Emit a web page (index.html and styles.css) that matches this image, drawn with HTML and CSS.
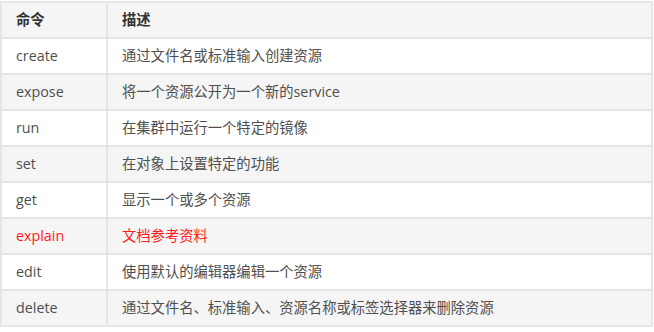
FILE: index.html
```html
<!DOCTYPE html>
<html lang="zh">
<head>
<meta charset="utf-8">
<link rel="stylesheet" href="styles.css">
</head>
<body>
<table class="cmd-table">
  <thead>
    <tr><th class="col-cmd">命令</th><th>描述</th></tr>
  </thead>
  <tbody>
    <tr><td>create</td><td>通过文件名或标准输入创建资源</td></tr>
    <tr><td>expose</td><td>将一个资源公开为一个新的service</td></tr>
    <tr><td>run</td><td>在集群中运行一个特定的镜像</td></tr>
    <tr><td>set</td><td>在对象上设置特定的功能</td></tr>
    <tr><td>get</td><td>显示一个或多个资源</td></tr>
    <tr class="hl"><td>explain</td><td>文档参考资料</td></tr>
    <tr><td>edit</td><td>使用默认的编辑器编辑一个资源</td></tr>
    <tr><td>delete</td><td>通过文件名、标准输入、资源名称或标签选择器来删除资源</td></tr>
  </tbody>
</table>
</body>
</html>
```

FILE: styles.css
```css
html, body {
  margin: 0;
  padding: 0;
  background: #fff;
}
.cmd-table {
  border-collapse: collapse;
  width: 653px;
  margin: 1px 0 0 0;
  font-family: "Open Sans", "Noto Sans CJK SC", sans-serif;
  font-size: 14.3px;
  color: #4f4f4f;
  table-layout: fixed;
}
.cmd-table th,
.cmd-table td {
  border: 2px solid #e3e5e7;
  height: 34px;
  padding: 0 14px;
  text-align: left;
  vertical-align: middle;
  line-height: 20px;
  white-space: nowrap;
}
.cmd-table th {
  font-weight: bold;
  color: #333;
  background: #f5f5f5;
}
.col-cmd {
  width: 76px;
}
.cmd-table tbody tr:nth-child(even) td {
  background: #f5f5f5;
}
.cmd-table tbody tr:nth-child(odd) td {
  background: #fff;
}
.cmd-table tr.hl td {
  color: #ff1a1a;
}
```
